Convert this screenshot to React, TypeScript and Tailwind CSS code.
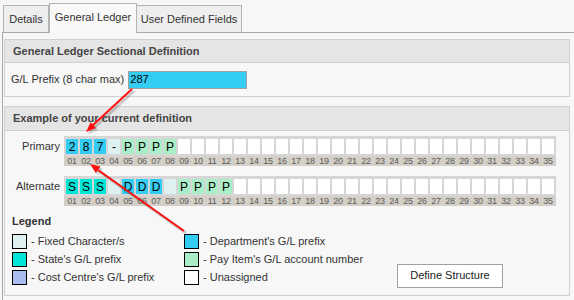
const DEPT = 'bg-[#33ccf2]';
const STATE = 'bg-[#00e6d6]';
const COST = 'bg-[#aabbee]';
const PAY = 'bg-[#aaeec8]';
const FIXED = 'bg-[#dff0f0]';
const NONE = 'bg-white';

type Cell = { c: string; t?: string };

const primary: Cell[] = [
  { c: DEPT, t: '2' },
  { c: DEPT, t: '8' },
  { c: DEPT, t: '7' },
  { c: FIXED, t: '-' },
  { c: PAY, t: 'P' },
  { c: PAY, t: 'P' },
  { c: PAY, t: 'P' },
  { c: PAY, t: 'P' },
];

const alternate: Cell[] = [
  { c: STATE, t: 'S' },
  { c: STATE, t: 'S' },
  { c: STATE, t: 'S' },
  { c: FIXED },
  { c: DEPT, t: 'D' },
  { c: DEPT, t: 'D' },
  { c: DEPT, t: 'D' },
  { c: FIXED },
  { c: PAY, t: 'P' },
  { c: PAY, t: 'P' },
  { c: PAY, t: 'P' },
  { c: PAY, t: 'P' },
];

function Strip({ label, cells }: { label: string; cells: Cell[] }) {
  const all: Cell[] = Array.from({ length: 35 }, (_, i) => cells[i] ?? { c: NONE });
  return (
    <div className="flex">
      <div className="w-[55px] h-[20px] flex items-center justify-end text-[#333]">{label}</div>
      <div className="ml-[4px] w-[492px] bg-[#d6d6d6] pt-[3px]">
        <div className="flex gap-[2px] pl-[2px]">
          {all.map((cell, i) => (
            <div
              key={i}
              className={`w-[12px] h-[15px] ${cell.c} flex items-center justify-center text-[12px] leading-none text-black`}
            >
              {cell.t}
            </div>
          ))}
        </div>
        <div className="mt-[2px] h-[10px] bg-[#d4d0c8] flex gap-[2px] pl-[2px]">
          {all.map((_, i) => (
            <div key={i} className="w-[12px] text-center text-[9px] leading-[10px] tracking-[-0.3px] text-[#5a5a5a]">
              {String(i + 1).padStart(2, '0')}
            </div>
          ))}
        </div>
      </div>
    </div>
  );
}

function Legend({ color, text }: { color: string; text: string }) {
  return (
    <div className="flex items-center h-[18px]">
      <div className={`w-[15px] h-[15px] border border-black ${color}`} />
      <span className="ml-[4px] text-[#333]">- {text}</span>
    </div>
  );
}

export default function App() {
  return (
    <div className="relative w-[574px] h-[300px] bg-[#f7f7f7] overflow-hidden pt-[3px] font-['Liberation_Sans',Arial,sans-serif] text-[11px]">
      {/* Tabs */}
      <div className="flex items-end h-[29px] pl-[3px]">
        <div className="w-[46px] h-[27px] flex items-center justify-center border border-b-0 border-[#b4b4b4] bg-[#eeeeee] text-[#333]">
          Details
        </div>
        <div className="relative z-10 w-[88px] h-[30px] -mb-[1px] flex items-center justify-center border border-b-0 border-[#b4b4b4] bg-[#f8f8f8] text-[#333] pb-[3px]">
          General Ledger
        </div>
        <div className="w-[105px] h-[27px] flex items-center justify-center border border-b-0 border-l-0 border-[#b4b4b4] bg-[#eeeeee] text-[#333]">
          User Defined Fields
        </div>
      </div>

      {/* Panel */}
      <div className="ml-[2px] border-l border-t border-[#a8a8a8] h-[268px] pl-[1px] pt-[6px] pr-[4px]">
        <div className="border border-[#d0d0d0]">
          <div className="h-[23px] bg-[#e5e5e5] border-b border-[#d0d0d0] flex items-center pl-[8px] font-bold text-[#444] text-[11px]">
            General Ledger Sectional Definition
          </div>
          <div className="h-[33px] flex items-center pl-[6px] text-[#333]">
            <span>G/L Prefix (8 char max)</span>
            <div className="ml-[4px] w-[119px] h-[18px] bg-[#33ccf2] border border-[#a0a0a0] flex items-center pl-[1px] text-black">
              287
            </div>
          </div>
        </div>

        <div className="mt-[9px] border border-[#d0d0d0] h-[190px]">
          <div className="h-[24px] bg-[#e5e5e5] border-b border-[#d0d0d0] flex items-center pl-[8px] font-bold text-[#444] text-[11px]">
            Example of your current definition
          </div>
          <div className="pt-[5px] flex flex-col gap-[10px]">
            <Strip label="Primary" cells={primary} />
            <Strip label="Alternate" cells={alternate} />
          </div>
          <div className="pl-[7px] pt-[7px] font-bold text-[#333] text-[11px]">Legend</div>
          <div className="flex pl-[7px] mt-[3px]">
            <div className="w-[172px] flex flex-col">
              <Legend color={FIXED} text="Fixed Character/s" />
              <Legend color={STATE} text="State's G/L prefix" />
              <Legend color={COST} text="Cost Centre's G/L prefix" />
            </div>
            <div className="w-[213px] flex flex-col">
              <Legend color={DEPT} text="Department's G/L prefix" />
              <Legend color={PAY} text="Pay Item's G/L account number" />
              <Legend color={NONE} text="Unassigned" />
            </div>
            <button className="self-end mb-[-1px] w-[106px] h-[24px] bg-white border border-[#a0a0a0] text-[#222] text-[11px]">
              Define Structure
            </button>
          </div>
        </div>
      </div>

      {/* Annotation arrows */}
      <svg className="absolute inset-0 pointer-events-none" width="574" height="300">
        <g stroke="#000" strokeOpacity="0.18" strokeWidth="3" fill="#000" fillOpacity="0.18">
          <line x1="134" y1="91" x2="94" y2="128" />
          <polygon points="88,134 98,130.1 92.6,124.3" stroke="none" />
          <line x1="186" y1="233" x2="100" y2="172" />
          <polygon points="92,166 102.5,168.6 97.8,175.1" stroke="none" />
        </g>
        <g stroke="#ff1010" strokeWidth="2" fill="#ff1010">
          <line x1="132" y1="89" x2="92" y2="126" />
          <polygon points="86,132 96,128.1 90.6,122.3" stroke="none" />
          <line x1="184" y1="231" x2="98" y2="170" />
          <polygon points="90,164 100.5,166.6 95.8,173.1" stroke="none" />
        </g>
      </svg>
    </div>
  );
}
